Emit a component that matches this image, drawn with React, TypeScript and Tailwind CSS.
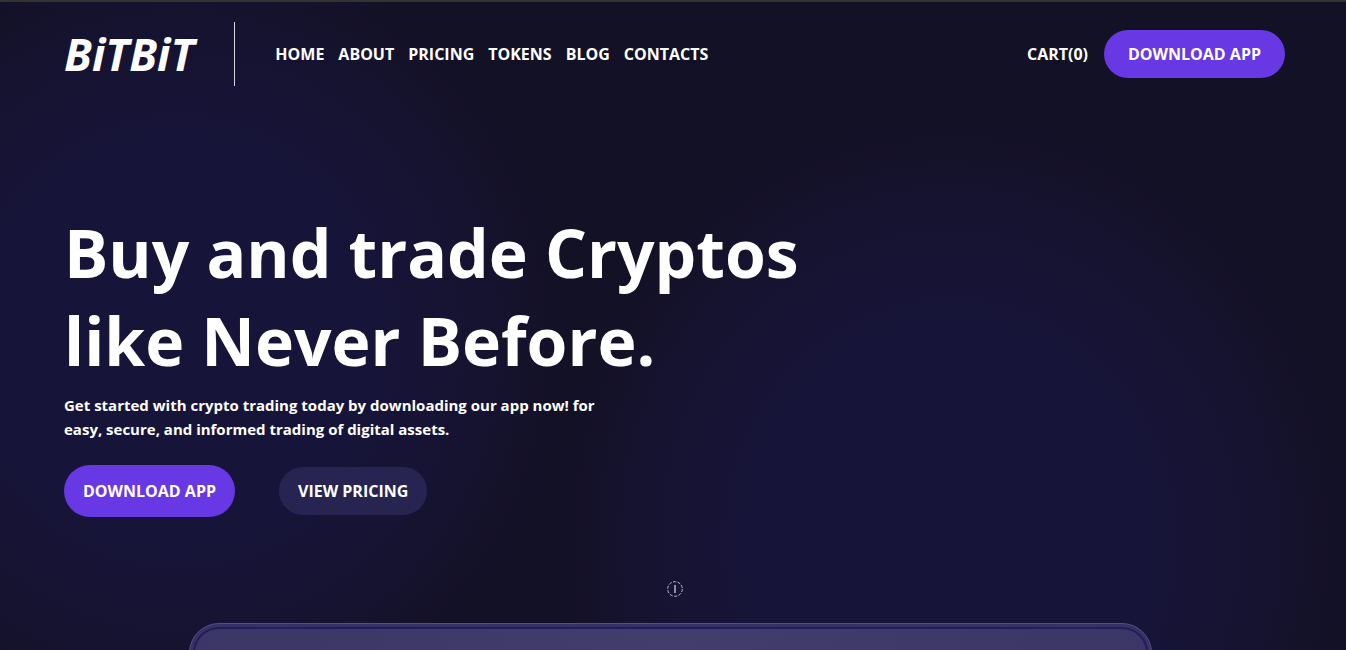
const links = ['Home', 'About', 'Pricing', 'Tokens', 'Blog', 'Contacts'];

function Backdrop() {
  return (
    <div aria-hidden="true" className="pointer-events-none absolute inset-0 -z-10 overflow-hidden">
      <div className="absolute -left-[210px] -top-[60px] h-[800px] w-[780px] bg-[radial-gradient(closest-side,#161438_0%,#161438_50%,#161331_78%,#13112500_100%)]" />
      <div className="absolute left-[550px] top-[110px] h-[860px] w-[800px] bg-[radial-gradient(closest-side,#161438_0%,#161438_50%,#161331_78%,#13112500_100%)]" />
    </div>
  );
}

function Header() {
  return (
    <header className="flex items-center justify-between pb-6 pt-5">
      <div className="flex items-center">
        <a href="#home" className="text-[45px] font-bold italic leading-[64px]">
          BiTBiT
        </a>
        <div className="ml-10 h-16 w-px bg-[#d5d4dd]" />
        <nav aria-label="Main" className="ml-10">
          <ul className="flex gap-[14px] text-base font-bold uppercase">
            {links.map((link) => (
              <li key={link}>
                <a href={`#${link.toLowerCase()}`}>{link}</a>
              </li>
            ))}
          </ul>
        </nav>
      </div>
      <div className="flex items-center gap-4 text-base font-bold uppercase">
        <a href="#cart">Cart(0)</a>
        <button type="button" className="rounded-full bg-[#6738e3] px-6 py-3 uppercase">
          Download app
        </button>
      </div>
    </header>
  );
}

function Hero() {
  return (
    <section className="pt-[98px]">
      <h1 className="text-[66px] font-bold leading-[88px]">
        Buy and trade Cryptos
        <br />
        like Never Before.
      </h1>
      <p className="mt-[9px] text-[15px] font-bold leading-6">
        Get started with crypto trading today by downloading our app now! for
        <br />
        easy, secure, and informed trading of digital assets.
      </p>
      <div className="mt-6 flex items-center gap-11 text-base font-bold">
        <button type="button" className="rounded-full bg-[#6738e3] px-[19px] py-[14px] uppercase">
          Download app
        </button>
        <button type="button" className="rounded-full bg-[#282452] px-[19px] py-3 uppercase">
          View pricing
        </button>
      </div>
    </section>
  );
}

function Notice() {
  return (
    <svg className="h-4 w-4" viewBox="0 0 16 16" fill="none" stroke="#b9b7c9" aria-hidden="true">
      <circle cx="8" cy="8" r="7.3" strokeWidth="1" strokeDasharray="3.2 1.4" />
      <path d="M8 4v8" strokeWidth="1.5" />
    </svg>
  );
}

export default function App() {
  return (
    <div className="relative isolate h-screen overflow-hidden border-t-2 border-[#333333] bg-[#131125] font-['Open_Sans','Noto_Sans',sans-serif] text-white">
      <Backdrop />
      <div className="pl-16 pr-[61px]">
        <Header />
        <Hero />
      </div>
      <div className="mt-16 flex justify-center pl-1">
        <Notice />
      </div>
      <div className="ml-[189px] mr-[194px] mt-[26px] h-40 rounded-[30px] border border-[#544e82] bg-[#373169] p-[3px]">
        <div className="h-full rounded-[26px] border-2 border-[#231e56] bg-[radial-gradient(ellipse_at_top,#423d6c,#383363)]" />
      </div>
    </div>
  );
}
